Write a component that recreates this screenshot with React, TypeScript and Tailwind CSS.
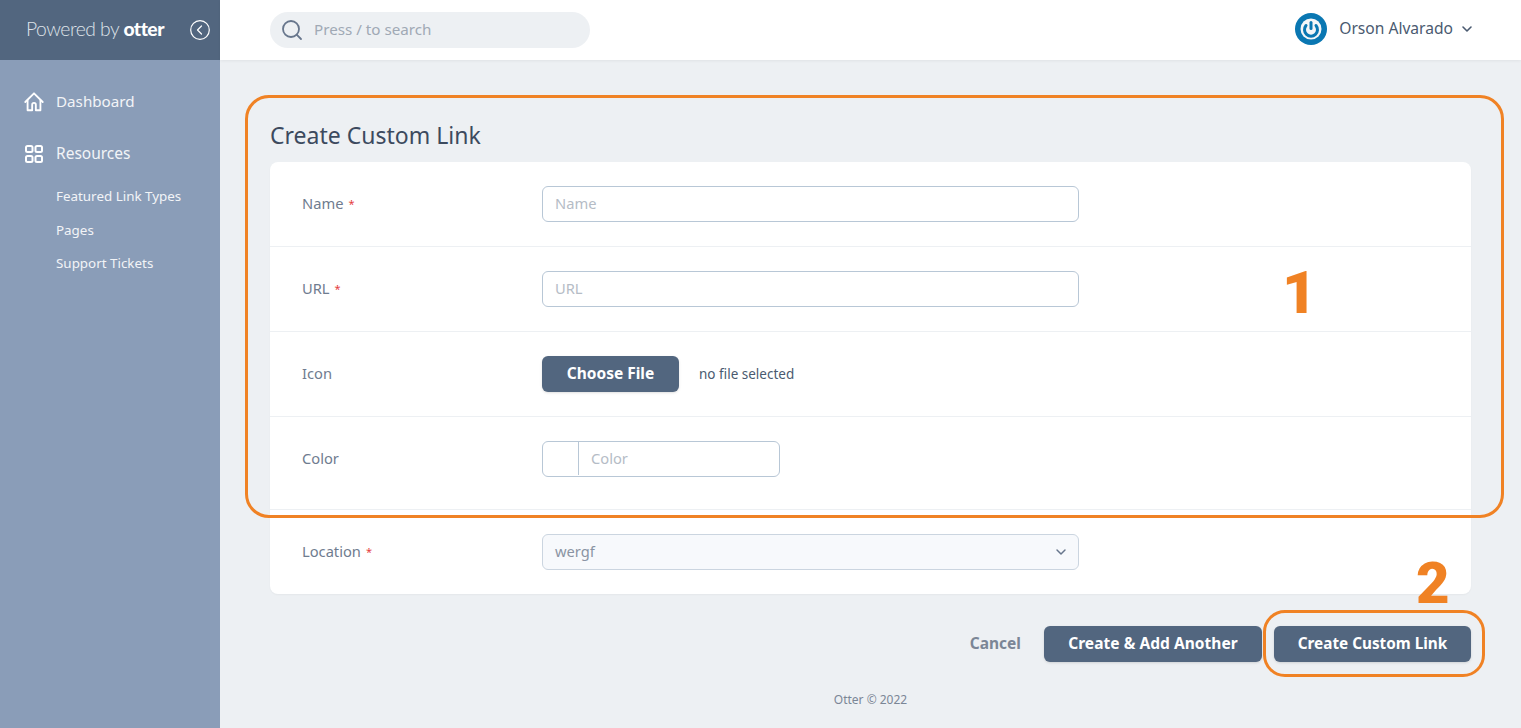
import { ChevronDown, Search } from 'lucide-react';

const font = { fontFamily: '"Noto Sans", sans-serif' };
const heavy = { fontFamily: 'Roboto, sans-serif' };

function Label({ text, required }: { text: string; required?: boolean }) {
  return (
    <div className="w-[240px] text-[14.7px] text-[#6f7c8f] pb-px">
      {text}
      {required && <span className="ml-[5px] text-[#e53e3e] text-[11px] align-[1px]">*</span>}
    </div>
  );
}

function Row({ label, required, children, className }: { label: string; required?: boolean; children: React.ReactNode; className?: string }) {
  return (
    <div className={`flex items-center pl-8 border-b border-[#edf0f3] ${className}`}>
      <Label text={label} required={required} />
      {children}
    </div>
  );
}

function TextInput({ placeholder }: { placeholder: string }) {
  return (
    <div className="w-[537px] h-9 px-3 pb-px flex items-center rounded-md border border-[#b8c7d6] bg-white text-[14.7px] text-[#b5bcc6]">
      {placeholder}
    </div>
  );
}

function HomeIcon() {
  return (
    <svg width="22" height="22" viewBox="0 0 24 24" fill="none" stroke="#fff" strokeWidth="2" strokeLinecap="round" strokeLinejoin="round">
      <path d="M2.5 12 12 2.5 21.5 12" />
      <path d="M5 10v11h5v-6a2 2 0 0 1 4 0v6h5V10" />
    </svg>
  );
}

function GridIcon() {
  return (
    <svg width="20" height="20" viewBox="0 0 20 20" fill="none" stroke="#fff" strokeWidth="2">
      <rect x="2" y="2" width="6.5" height="6" rx="1.5" />
      <rect x="11.5" y="2" width="6.5" height="6" rx="1.5" />
      <rect x="2" y="12" width="6.5" height="6" rx="1.5" />
      <rect x="11.5" y="12" width="6.5" height="6" rx="1.5" />
    </svg>
  );
}

export default function App() {
  return (
    <div className="relative flex w-[1521px] h-[728px] overflow-hidden bg-[#edf0f3]" style={font}>
      <aside className="w-[220px] shrink-0 bg-[#8a9db8] text-white">
        <div className="h-[60px] bg-[#52667f] flex items-center pl-[26px] pr-[10px] justify-between">
          <div className="text-[19.3px] font-light text-[#dfe3e9] tracking-[-0.5px] whitespace-nowrap pb-[2px]" style={{ fontFamily: '"Lato", sans-serif' }}>
            Powered by <span className="font-black text-white">otter</span>
          </div>
          <svg width="20" height="20" viewBox="0 0 20 20" fill="none" stroke="#fff" strokeWidth="1.2" strokeLinecap="round" strokeLinejoin="round">
            <circle cx="10" cy="10" r="9.3" />
            <path d="M11.5 6 7.5 10l4 4" />
          </svg>
        </div>
        <nav className="pt-[30px] pl-6">
          <div className="flex items-center gap-[11px] h-6 text-[15.2px] text-[#f2f4f7] -ml-[1px]">
            <HomeIcon />
            <span className="pb-[2px]">Dashboard</span>
          </div>
          <div className="flex items-center gap-[12px] h-6 mt-7 text-[15.5px] text-[#f2f4f7]">
            <GridIcon />
            Resources
          </div>
          <div className="pl-8 pt-[21px] flex flex-col gap-[15px] text-[13.4px] leading-[18.5px] text-[#f2f4f7]">
            <div>Featured Link Types</div>
            <div>Pages</div>
            <div>Support Tickets</div>
          </div>
        </nav>
      </aside>

      <main className="flex-1 flex flex-col min-w-0">
        <header className="h-[60px] bg-white shadow-[0_1px_3px_rgba(0,0,0,0.06)] flex items-center justify-between pl-[50px] pr-[46px]">
          <div className="w-[320px] h-9 rounded-full bg-[#edf0f3] flex items-center pl-[10px] gap-[10px] text-[15.2px] text-[#a0a9b5]">
            <Search size={24} strokeWidth={1.8} color="#67768c" />
            <span className="pb-[2px]">Press / to search</span>
          </div>
          <div className="flex items-center text-[15.6px] text-[#4a5a70] pb-[2px]">
            <svg width="32" height="32" viewBox="0 0 32 32" fill="none">
              <circle cx="16" cy="16" r="16" fill="#0a77b2" />
              <circle cx="16" cy="16" r="10.5" fill="#f4f6f8" />
              <path d="M16 9.5v6" stroke="#0a77b2" strokeWidth="3" strokeLinecap="round" />
              <path d="M11 12.5a6.5 6.5 0 1 0 10 0" stroke="#0a77b2" strokeWidth="3" strokeLinecap="round" />
            </svg>
            <span className="ml-3 pb-px">Orson Alvarado</span>
            <ChevronDown size={16} strokeWidth={2.4} className="ml-[6px]" />
          </div>
        </header>

        <div className="flex-1 pl-[50px] pr-[50px]">
          <h1 className="pt-[59px] text-[23px] leading-8 text-[#3c4a5e]">Create Custom Link</h1>
          <div className="mt-[11px] bg-white rounded-lg shadow-[0_1px_2px_rgba(0,0,0,0.04)]">
            <Row label="Name" required className="h-[85px]">
              <TextInput placeholder="Name" />
            </Row>
            <Row label="URL" required className="h-[85px]">
              <TextInput placeholder="URL" />
            </Row>
            <Row label="Icon" className="h-[85px]">
              <div className="flex items-center">
                <div className="w-[137px] h-9 pb-px rounded-md bg-[#52667f] shadow-sm flex items-center justify-center text-[15.5px] font-bold text-white">Choose File</div>
                <span className="ml-5 text-[13.5px] text-[#4a5a70]">no file selected</span>
              </div>
            </Row>
            <Row label="Color" className="h-[93px] pb-2">
              <div className="w-[238px] h-9 pb-px flex items-center rounded-md border border-[#b8c7d6] text-[14.7px] text-[#b5bcc6]">
                <div className="w-9 h-full border-r border-[#b8c7d6]" />
                <span className="pl-3">Color</span>
              </div>
            </Row>
            <div className="flex items-center pl-8 h-[84px]">
              <Label text="Location" required />
              <div className="w-[537px] h-9 pl-3 pr-[9px] pb-px flex items-center justify-between rounded-md border border-[#cbd5e0] bg-[#f7f9fc] text-[14.7px] text-[#8a94a3]">
                wergf
                <ChevronDown size={16} strokeWidth={2.2} color="#67768c" />
              </div>
            </div>
          </div>
          <div className="mt-8 flex items-center justify-end">
            <span className="text-[15.5px] font-bold text-[#7b8696] pb-px">Cancel</span>
            <div className="ml-[23px] w-[218px] h-9 pb-px rounded-md bg-[#52667f] shadow-sm flex items-center justify-center text-[15.5px] tracking-[0.05px] font-bold text-white">Create &amp; Add Another</div>
            <div className="ml-3 w-[197px] h-9 pb-px rounded-md bg-[#52667f] shadow-sm flex items-center justify-center text-[15.3px] font-bold text-white">Create Custom Link</div>
          </div>
          <div className="mt-[30px] text-center text-xs text-[#7b8696]">Otter © 2022</div>
        </div>
      </main>

      {/* annotations drawn over the screenshot */}
      <div className="absolute left-[245px] top-[95px] w-[1259px] h-[423px] rounded-[24px] border-[3px] border-[#f08224]" />
      <div className="absolute left-[1263px] top-[610px] w-[222px] h-[67px] rounded-[22px] border-[3px] border-[#f08224]" />
      <div className="absolute left-[1282px] top-[259px] text-[60px] leading-[68px] font-black text-[#f08224]" style={heavy}>1</div>
      <div className="absolute left-[1416px] top-[550px] text-[58px] leading-[66px] font-black text-[#f08224]" style={heavy}>2</div>
    </div>
  );
}
